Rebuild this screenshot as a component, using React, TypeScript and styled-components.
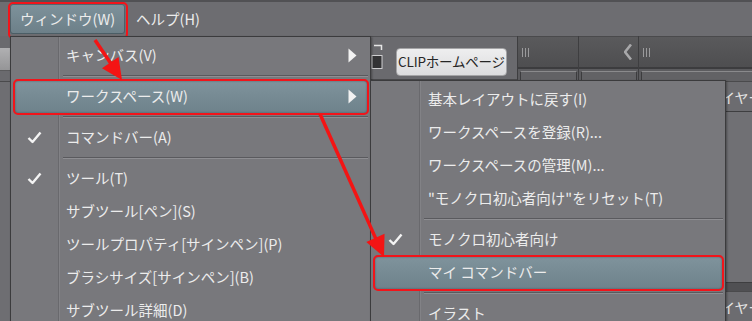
import styled, { createGlobalStyle } from 'styled-components';

const GlobalStyle = createGlobalStyle`
  html, body {
    margin: 0;
    padding: 0;
    background: #6e6e72;
  }
  body {
    font-family: "Noto Sans CJK JP", "Noto Sans", sans-serif;
  }
`;

const Screen = styled.div`
  position: relative;
  width: 752px;
  height: 321px;
  overflow: hidden;
  background: #6e6e72;
  color: #ececec;
  font-size: 14.5px;
`;

const MenuBar = styled.div`
  height: 36px;
  box-sizing: border-box;
  border-top: 2px solid #515154;
  padding: 2px 0 0 10px;
  display: flex;
  align-items: flex-start;
  gap: 11px;
  background: #6d6d71;
`;

const TopItem = styled.div<{ $active?: boolean }>`
  position: relative;
  height: 30px;
  width: ${({ $active }) => ($active ? '115px' : 'auto')};
  box-sizing: border-box;
  display: flex;
  align-items: center;
  padding-left: ${({ $active }) => ($active ? '10px' : '0')};
  border-radius: 3px;
  line-height: 1;
  white-space: nowrap;
  background: ${({ $active }) =>
    $active ? 'linear-gradient(#7e929b, #6c7f88)' : 'transparent'};
  box-shadow: ${({ $active }) =>
    $active ? 'inset 0 0 0 1px rgba(50, 65, 72, 0.55)' : 'none'};
  &::after {
    content: '';
    display: ${({ $active }) => ($active ? 'block' : 'none')};
    position: absolute;
    inset: -2px -3px -5px -2px;
    border: 2px solid #f2141a;
    border-radius: 5px;
  }
`;

const Workspace = styled.div`
  display: grid;
  grid-template-columns: 10px 507px 61px 60px 1fr;
  height: 285px;
`;

const LeftDock = styled.div`
  display: flex;
  flex-direction: column;
  background: #6a6a6e;
`;

const DockButton = styled.div`
  margin-top: 12px;
  height: 22px;
  background: linear-gradient(#b0b0b2, #959597);
  border-bottom: 1px solid #5a5a5c;
`;

const DockRule = styled.div`
  margin-top: 10px;
  border-top: 1px solid #4a4a4c;
  flex: 1;
  background: #6e6e72;
`;

const Center = styled.div`
  display: flex;
  flex-direction: column;
`;

const Toolbar = styled.div`
  height: 44px;
  box-sizing: border-box;
  display: flex;
  justify-content: flex-end;
  align-items: flex-start;
  gap: 13px;
  padding: 4px 10px 0 0;
  background: #6a6a6e;
  border-top: 1px solid #505053;
  border-bottom: 1px solid #4a4a4c;
`;

const ClipButton = styled.div`
  margin-top: 7px;
  height: 28px;
  width: 111px;
  box-sizing: border-box;
  display: flex;
  align-items: center;
  justify-content: center;
  background: linear-gradient(#eeeeef, #dcdcde);
  border: 1px solid #a4a4a6;
  border-radius: 4px;
  color: #262626;
  font-size: 13.5px;
  letter-spacing: -0.2px;
  line-height: 1;
`;

const Canvas = styled.div`
  flex: 1;
  background: #6e6e72;
`;

const DockColumn = styled.div`
  display: flex;
  flex-direction: column;
  border-left: 1px solid #3e3e40;
  background: #5e5e61;
`;

const PanelHeader = styled.div<{ $align?: string }>`
  height: 30px;
  display: flex;
  align-items: center;
  justify-content: ${({ $align }) => $align || 'flex-start'};
  padding: 0 6px 0 4px;
  background: linear-gradient(#5a5a5c, #4e4e50);
  border-top: 1px solid #4a4a4c;
  border-bottom: 2px solid #3c3c3e;
`;

const Grip = styled.span`
  display: flex;
  gap: 2px;
  & > i {
    display: block;
    width: 1px;
    height: 9px;
    background: #9a9a9c;
  }
`;

const PanelBody = styled.div`
  flex: 1;
  padding: 2px 1px 0 2px;
  display: flex;
  background: #5c5c5f;
`;

const InnerBox = styled.div<{ $pad?: string }>`
  flex: 1;
  min-width: 0;
  display: flex;
  flex-direction: column;
  padding: ${({ $pad }) => $pad || '0'};
  background: #626265;
  border: 1px solid #3c3c3e;
  border-top-color: #8a8a8c;
  overflow: hidden;
`;

const LayerTab = styled.div`
  height: 31px;
  flex: none;
  box-sizing: border-box;
  display: flex;
  align-items: center;
  padding-left: 33px;
  background: #6c6c70;
  border: 1px solid #4a4a4c;
  border-bottom-color: #3e3e40;
  color: #e4e4e4;
  font-size: 14px;
  line-height: 1;
  white-space: nowrap;
  overflow: hidden;
`;

const LayerList = styled.div`
  height: 170px;
  flex: none;
  background: #707074;
`;

const LayerBand = styled.div`
  height: 8px;
  flex: none;
  background: #505053;
  border-top: 1px solid #3e3e40;
`;

const Dropdown = styled.div<{ $left: number; $top: number; $width: number; $gutter: number }>`
  position: absolute;
  left: ${({ $left }) => $left}px;
  top: ${({ $top }) => $top}px;
  width: ${({ $width }) => $width}px;
  box-sizing: border-box;
  padding-top: 2px;
  background: #78787c;
  border: 1px solid #3b3b3d;
  box-shadow: 1px 1px 2px rgba(0, 0, 0, 0.35);
  display: flex;
  flex-direction: column;
  &::before {
    content: '';
    position: absolute;
    top: 0;
    bottom: 0;
    left: ${({ $gutter }) => $gutter}px;
    width: 1px;
    background: #69696d;
    box-shadow: 1px 0 0 #828286;
  }
`;

const Item = styled.div<{ $gutter: number; $active?: boolean }>`
  position: relative;
  height: 33px;
  flex: none;
  display: grid;
  grid-template-columns: ${({ $gutter }) => $gutter}px 1fr 22px;
  align-items: center;
  line-height: 1;
  &::before {
    content: '';
    display: ${({ $active }) => ($active ? 'block' : 'none')};
    position: absolute;
    inset: 1px 3px 0 4px;
    border-radius: 3px;
    background: linear-gradient(#7f939c, #6e828b);
    box-shadow: inset 0 0 2px rgba(40, 55, 62, 0.6);
    outline: 2px solid #f2141a;
    outline-offset: 0;
  }
  & > * {
    position: relative;
  }
`;

const CheckCell = styled.span`
  display: flex;
  justify-content: center;
`;

const Label = styled.span<{ $pad: number }>`
  padding-left: ${({ $pad }) => $pad}px;
  white-space: nowrap;
`;

const ArrowCell = styled.span`
  display: flex;
  justify-content: flex-start;
`;

const Separator = styled.div<{ $gutter: number }>`
  height: 8px;
  flex: none;
  display: flex;
  align-items: center;
  padding: 0 2px 0 ${({ $gutter }) => $gutter + 5}px;
  &::after {
    content: '';
    flex: 1;
    height: 0;
    border-top: 1px solid #5a5a5e;
    border-bottom: 1px solid #8e8e92;
  }
`;

const Overlay = styled.svg`
  position: absolute;
  left: 0;
  top: 0;
  pointer-events: none;
`;

const Check = () => (
  <svg width="15" height="13" viewBox="0 0 15 13">
    <path d="M1.5 7 L5.5 11 L13.5 1.5" fill="none" stroke="#f4f4f4" strokeWidth="2.4" strokeLinejoin="round" />
  </svg>
);

const SubArrow = () => (
  <svg width="9" height="15" viewBox="0 0 9 15">
    <path d="M0.5 0.5 L8.5 7.5 L0.5 14.5 Z" fill="#f2f2f2" />
  </svg>
);

const FitIcon = () => (
  <svg width="12" height="36" viewBox="0 0 12 36">
    <path d="M3 4.5 H10.5 V9" fill="none" stroke="#e6e6e6" strokeWidth="1.5" />
    <rect x="1" y="14.5" width="10" height="13" fill="#333335" stroke="#cfcfd1" />
  </svg>
);

type Row =
  | { kind: 'sep' }
  | { kind: 'item'; label: string; checked?: boolean; sub?: boolean; active?: boolean };

const windowMenu: Row[] = [
  { kind: 'item', label: 'キャンバス(V)', sub: true },
  { kind: 'sep' },
  { kind: 'item', label: 'ワークスペース(W)', sub: true, active: true },
  { kind: 'sep' },
  { kind: 'item', label: 'コマンドバー(A)', checked: true },
  { kind: 'sep' },
  { kind: 'item', label: 'ツール(T)', checked: true },
  { kind: 'item', label: 'サブツール[ペン](S)' },
  { kind: 'item', label: 'ツールプロパティ[サインペン](P)' },
  { kind: 'item', label: 'ブラシサイズ[サインペン](B)' },
  { kind: 'item', label: 'サブツール詳細(D)' },
];

const workspaceMenu: Row[] = [
  { kind: 'item', label: '基本レイアウトに戻す(I)' },
  { kind: 'item', label: 'ワークスペースを登録(R)...' },
  { kind: 'item', label: 'ワークスペースの管理(M)...' },
  { kind: 'item', label: '"モノクロ初心者向け"をリセット(T)' },
  { kind: 'sep' },
  { kind: 'item', label: 'モノクロ初心者向け', checked: true },
  { kind: 'item', label: 'マイ コマンドバー', active: true },
  { kind: 'sep' },
  { kind: 'item', label: 'イラスト' },
];

const Menu = ({
  rows,
  left,
  top,
  width,
  gutter,
  pad,
}: {
  rows: Row[];
  left: number;
  top: number;
  width: number;
  gutter: number;
  pad: number;
}) => (
  <Dropdown $left={left} $top={top} $width={width} $gutter={gutter}>
    {rows.map((row, index) =>
      row.kind === 'sep' ? (
        <Separator key={index} $gutter={gutter} />
      ) : (
        <Item key={index} $gutter={gutter} $active={row.active}>
          <CheckCell>{row.checked && <Check />}</CheckCell>
          <Label $pad={pad}>{row.label}</Label>
          <ArrowCell>{row.sub && <SubArrow />}</ArrowCell>
        </Item>
      ),
    )}
  </Dropdown>
);

const Arrow = ({ x1, y1, x2, y2 }: { x1: number; y1: number; x2: number; y2: number }) => {
  const dx = x2 - x1;
  const dy = y2 - y1;
  const len = Math.hypot(dx, dy);
  const ux = dx / len;
  const uy = dy / len;
  const head = 21;
  const half = 10;
  const bx = x2 - ux * head;
  const by = y2 - uy * head;
  const pts = `${x2},${y2} ${bx - uy * half},${by + ux * half} ${bx + uy * half},${by - ux * half}`;
  return (
    <g>
      <line x1={x1} y1={y1} x2={bx + ux * 2} y2={by + uy * 2} stroke="#f41414" strokeWidth="3.5" />
      <polygon points={pts} fill="#f41414" />
    </g>
  );
};

const App = () => (
  <>
    <GlobalStyle />
    <Screen>
      <MenuBar>
        <TopItem $active>ウィンドウ(W)</TopItem>
        <TopItem>ヘルプ(H)</TopItem>
      </MenuBar>
      <Workspace>
        <LeftDock>
          <DockButton />
          <DockRule />
        </LeftDock>
        <Center>
          <Toolbar>
            <FitIcon />
            <ClipButton>CLIPホームページ</ClipButton>
          </Toolbar>
          <Canvas />
        </Center>
        <DockColumn>
          <PanelHeader>
            <Grip>
              <i />
              <i />
              <i />
            </Grip>
          </PanelHeader>
          <PanelBody>
            <InnerBox />
          </PanelBody>
        </DockColumn>
        <DockColumn>
          <PanelHeader $align="flex-end">
            <svg width="8" height="16" viewBox="0 0 8 16">
              <path d="M7 0.5 L1 8 L7 15.5" fill="none" stroke="#a8a8aa" strokeWidth="2.6" />
            </svg>
          </PanelHeader>
          <PanelBody>
            <InnerBox />
          </PanelBody>
        </DockColumn>
        <DockColumn>
          <PanelHeader>
            <Grip>
              <i />
              <i />
              <i />
            </Grip>
          </PanelHeader>
          <PanelBody>
            <InnerBox $pad="9px 0 0 31px">
              <LayerTab>レイヤー</LayerTab>
              <LayerList />
              <LayerBand />
              <LayerTab>レイヤー</LayerTab>
            </InnerBox>
          </PanelBody>
        </DockColumn>
      </Workspace>

      <Menu rows={windowMenu} left={10} top={36} width={361} gutter={47} pad={8} />
      <Menu rows={workspaceMenu} left={370} top={80} width={356} gutter={48} pad={9} />

      <Overlay width="752" height="321" viewBox="0 0 752 321">
        <Arrow x1={95} y1={40} x2={122} y2={80} />
        <Arrow x1={320} y1={114} x2={384} y2={257} />
      </Overlay>
    </Screen>
  </>
);

export default App;
